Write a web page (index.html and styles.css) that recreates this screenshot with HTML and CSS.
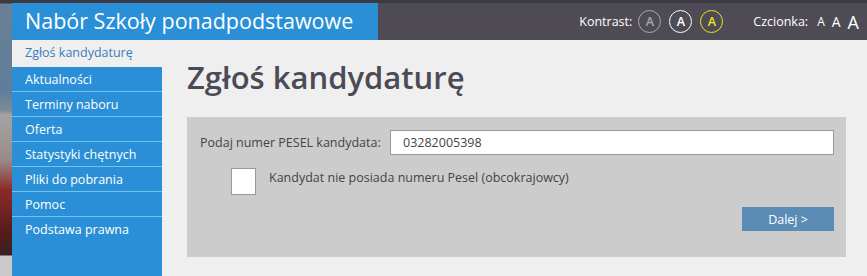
FILE: index.html
```html
<!DOCTYPE html>
<html lang="pl">
<head>
    <meta charset="UTF-8">
    <meta name="viewport" content="width=device-width, initial-scale=1.0">
    <title>Nabór Szkoły ponadpodstawowe</title>
    <link rel="stylesheet" href="styles.css">
</head>
<body>
    <div class="page">
        <header class="header">
            <div class="brand">Nabór Szkoły ponadpodstawowe</div>
            <div class="tools">
                <span class="tools-label">Kontrast:</span>
                <a class="contrast contrast-grey">A</a>
                <a class="contrast contrast-white">A</a>
                <a class="contrast contrast-yellow">A</a>
                <span class="tools-label fonts-label">Czcionka:</span>
                <a class="font-size fs-small">A</a>
                <a class="font-size fs-medium">A</a>
                <a class="font-size fs-large">A</a>
            </div>
        </header>

        <div class="layout">
            <nav class="sidebar">
                <ul class="menu">
                    <li class="menu-item active"><a>Zgłoś kandydaturę</a></li>
                    <li class="menu-item"><a>Aktualności</a></li>
                    <li class="menu-item"><a>Terminy naboru</a></li>
                    <li class="menu-item"><a>Oferta</a></li>
                    <li class="menu-item"><a>Statystyki chętnych</a></li>
                    <li class="menu-item"><a>Pliki do pobrania</a></li>
                    <li class="menu-item"><a>Pomoc</a></li>
                    <li class="menu-item"><a>Podstawa prawna</a></li>
                </ul>
            </nav>

            <main class="content">
                <h1 class="title">Zgłoś kandydaturę</h1>
                <form class="panel" method="get" action=".">
                    <div class="row">
                        <label class="pesel-label" for="pesel">Podaj numer PESEL kandydata:</label>
                        <input class="pesel-input" type="text" id="pesel" name="pesel" value="03282005398">
                    </div>
                    <div class="row check-row">
                        <span class="checkbox"></span>
                        <span class="check-label">Kandydat nie posiada numeru Pesel (obcokrajowcy)</span>
                    </div>
                    <div class="row actions">
                        <button class="btn" type="button">Dalej &gt;</button>
                    </div>
                </form>
            </main>
        </div>
    </div>
</body>
</html>
```

FILE: styles.css
```css
body {
    margin: 0;
    font-family: "Open Sans", "Liberation Sans", sans-serif;
    background: linear-gradient(to bottom, #3c3a41 0, #3c3a41 3px, #6b7f95 4px, #5f7e9c 90px, #7d8a96 110px, #a3a3a3 115px, #9a8a8a 160px, #8c2a2a 190px, #5a1c1c 230px, #3a2020 255px, #c9c9c9 256px);
}

.page {
    margin-left: 12px;
    min-height: 276px;
    background-color: #efefef;
}

.header {
    display: flex;
    height: 37px;
    border-top: 3px solid #3d3b42;
    background-color: #4e4b55;
}

.brand {
    width: 353px;
    padding-left: 13px;
    background-color: #2a8fd6;
    color: #fff;
    font-size: 21.5px;
    line-height: 36px;
    white-space: nowrap;
}

.tools {
    flex: 1;
    display: flex;
    align-items: center;
    justify-content: flex-end;
    padding-right: 8px;
    color: #fff;
    font-size: 12.5px;
}

.tools-label {
    margin-right: 6px;
}

.fonts-label {
    margin-left: 30px;
    margin-right: 9px;
}

.contrast {
    display: flex;
    align-items: center;
    justify-content: center;
    width: 21px;
    height: 21px;
    margin-right: 8px;
    border-radius: 50%;
    font-size: 12.5px;
    font-weight: 600;
}

.contrast-grey {
    border: 1px solid #a9a9ad;
    color: #a9a9ad;
}

.contrast-white {
    border: 1px solid #fff;
    color: #fff;
}

.contrast-yellow {
    margin-right: 0;
    border: 1px solid #e6e61a;
    color: #e6e61a;
}

.font-size {
    margin-left: 7px;
    line-height: 1;
}

.fs-small {
    margin-left: 0;
    font-size: 12px;
}

.fs-medium {
    font-size: 14px;
}

.fs-large {
    font-size: 18px;
}

.layout {
    display: flex;
    min-height: 236px;
}

.sidebar {
    width: 150px;
    background-color: #2a8fd6;
}

.menu {
    margin: 0;
    padding: 0;
    list-style: none;
}

.menu-item a {
    display: block;
    height: 24px;
    padding-left: 13px;
    border-bottom: 1px solid #6cc6f2;
    color: #fff;
    font-size: 12.5px;
    line-height: 25px;
}

.menu-item:last-child a {
    border-bottom: none;
}

.menu-item.active a {
    height: 27px;
    border-bottom: none;
    background-color: #efefef;
    color: #3b7cbf;
    line-height: 25px;
}

.content {
    flex: 1;
    padding-left: 25px;
    padding-right: 21px;
}

.title {
    margin: 16px 0 18px;
    color: #4b4a55;
    font-size: 31px;
    font-weight: 600;
    line-height: 43px;
}

.panel {
    padding: 13px 12px 26px 13px;
    background-color: #cccccc;
    color: #444;
    font-size: 12.5px;
}

.row {
    display: flex;
    align-items: center;
}

.pesel-label {
    width: 190px;
}

.pesel-input {
    flex: 1;
    height: 25px;
    box-sizing: border-box;
    padding: 0 12px;
    border: 1px solid #999;
    background-color: #fff;
    color: #444;
    font-family: "Open Sans", "Liberation Sans", sans-serif;
    font-size: 12.5px;
}

.check-row {
    align-items: flex-start;
    margin-top: 13px;
}

.checkbox {
    width: 23px;
    height: 25px;
    margin-left: 31px;
    border: 1px solid #999;
    background-color: #fff;
}

.check-label {
    margin-left: 13px;
    line-height: 19px;
}

.actions {
    justify-content: flex-end;
    margin-top: 12px;
}

.btn {
    width: 92px;
    height: 24px;
    border: none;
    background-color: #5a8cb5;
    color: #fff;
    font-family: "Open Sans", "Liberation Sans", sans-serif;
    font-size: 12.5px;
    cursor: pointer;
}
```
